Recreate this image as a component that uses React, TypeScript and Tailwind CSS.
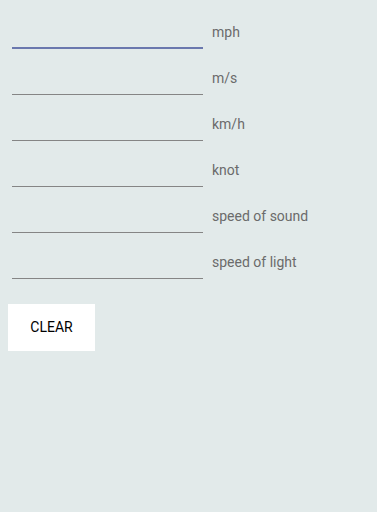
const units = ["mph", "m/s", "km/h", "knot", "speed of sound", "speed of light"];

export default function App() {
  return (
    <div
      className="w-[377px] h-[512px] bg-[#e2eaea] pt-[3px]"
      style={{ fontFamily: "Roboto, 'Noto Sans', sans-serif" }}
    >
      {units.map((unit, i) => (
        <div key={unit} className="flex h-[46px]">
          <div
            className={`ml-[12px] w-[191px] h-full ${
              i === 0 ? "border-b-2 border-[#6a78ae]" : "border-b border-[#858585]"
            }`}
          />
          <div className="ml-[9px] pt-[19px] text-[14px] leading-[20px] text-[#6b6b6b]">
            {unit}
          </div>
        </div>
      ))}
      <button className="mt-[25px] ml-[8px] w-[87px] h-[47px] bg-white text-[14px] font-normal text-black">
        CLEAR
      </button>
    </div>
  );
}
